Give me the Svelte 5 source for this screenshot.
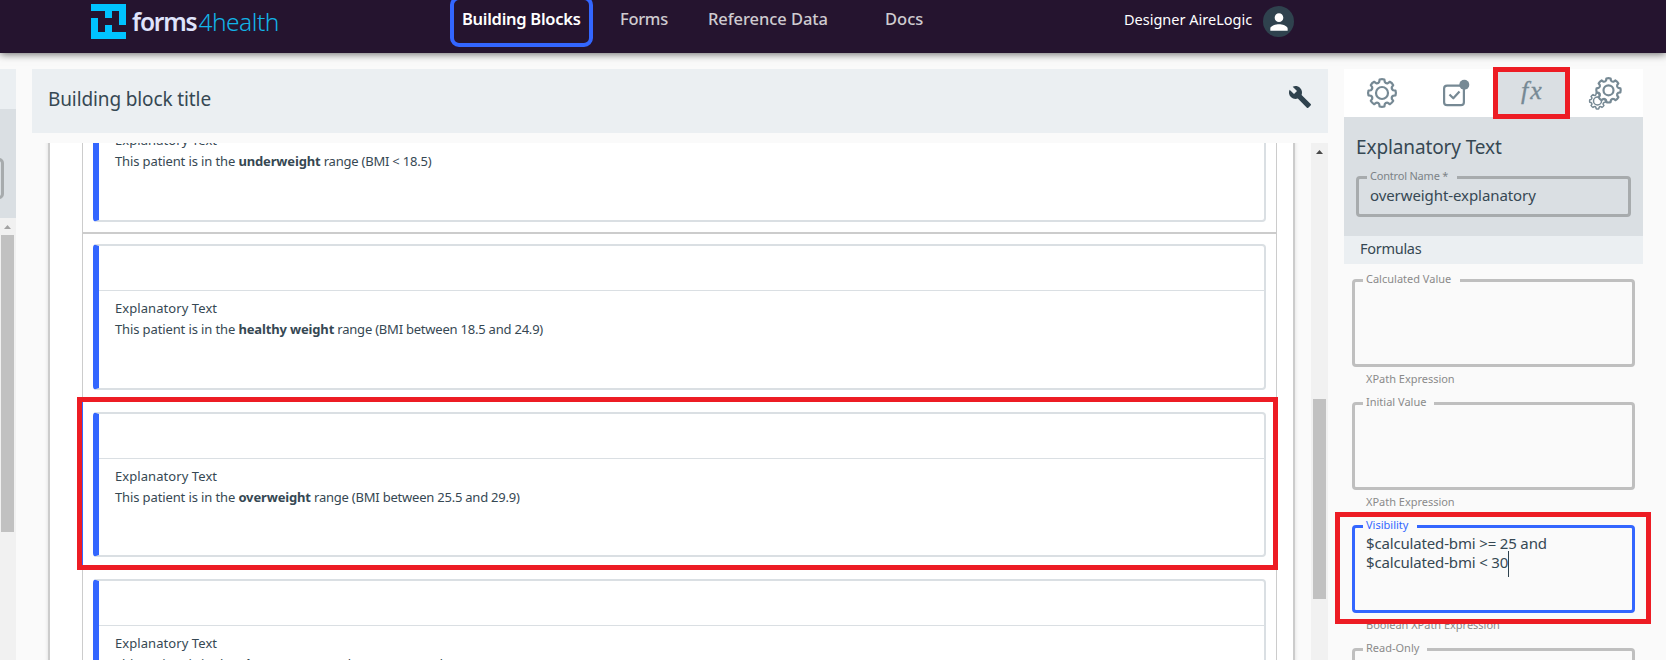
<script>
  const nav = [
    { label: 'Building Blocks', kind: 'blocks' },
    { label: 'Forms', kind: 'forms' },
    { label: 'Reference Data', kind: 'reference' },
    { label: 'Docs', kind: 'docs' }
  ];

  const cards = [
    { range: 'underweight', detail: '(BMI < 18.5)' },
    { range: 'healthy weight', detail: '(BMI between 18.5 and 24.9)' },
    { range: 'overweight', detail: '(BMI between 25.5 and 29.9)', selected: true },
    { range: 'obese', detail: '(BMI between 30 and 39.9)' }
  ];

  const formulas = [
    { label: 'Calculated Value', notch: 97, hint: 'XPath Expression', lines: [] },
    { label: 'Initial Value', notch: 71, hint: 'XPath Expression', lines: [] },
    {
      label: 'Visibility',
      notch: 54,
      hint: 'Boolean XPath Expression',
      lines: ['$calculated-bmi >= 25 and', '$calculated-bmi < 30'],
      focused: true
    },
    { label: 'Read-Only', notch: 64, hint: '', lines: [] }
  ];

  // Outline of an eight-toothed cog centred on (cx, cy)
  function cog(cx, cy, r) {
    const p = (k, deg) => {
      const a = (deg * Math.PI) / 180;
      return `${(cx + r * k * Math.sin(a)).toFixed(2)} ${(cy - r * k * Math.cos(a)).toFixed(2)}`;
    };
    let d = '';
    for (let i = 0; i < 8; i++) {
      const a = i * 45;
      d += `${i ? 'L' : 'M'}${p(0.82, a - 14)}L${p(0.98, a - 10)}Q${p(1.02, a)} ${p(0.98, a + 10)}L${p(0.82, a + 14)}Q${p(0.72, a + 22.5)} ${p(0.82, a + 31)}`;
    }
    return d + 'Z';
  }
</script>

<div class="page">
  <header>
    <div class="brand">
      <svg width="35" height="35" viewBox="0 0 5 5" shape-rendering="crispEdges" fill="#00c3ff">
        <path d="M0 0H5V3H4V1H3V2H2V1H0Z" />
        <path d="M0 2H1V4H2V3H3V4H5V5H0Z" />
      </svg>
      <span class="name"><b>forms</b><i>4health</i></span>
    </div>
    <nav>
      {#each nav as item}
        <a class={item.kind}>{item.label}</a>
      {/each}
    </nav>
    <div class="user">
      <span>Designer AireLogic</span>
      <div class="avatar">
        <svg width="26" height="26" viewBox="0 0 24 24" fill="#fff">
          <path d="M12 12c2.21 0 4-1.79 4-4s-1.79-4-4-4-4 1.79-4 4 1.79 4 4 4zm0 2c-2.67 0-8 1.34-8 4v2h16v-2c0-2.660-5.330-4-8-4z" />
        </svg>
      </div>
    </div>
  </header>

  <main>
    <aside class="left">
      <div class="left-head"></div>
      <div class="left-search"><div class="left-input"></div></div>
      <div class="track">
        <svg class="arrow" width="7" height="4" viewBox="0 0 7 4"><path d="M3.500 0L7 4H0Z" fill="#a3a3a3" /></svg>
        <div class="thumb"></div>
      </div>
    </aside>

    <section class="center">
      <div class="title">
        <h1>Building block title</h1>
        <svg width="24" height="24" viewBox="0 0 24 24" fill="#2f424e">
          <path d="M22.700 19l-9.100-9.100c.9-2.300.4-5-1.500-6.900-2-2-5-2.400-7.400-1.300L9 6 6 9 1.600 4.700C.4 7.100.9 10.100 2.900 12.100c1.900 1.900 4.600 2.400 6.900 1.500l9.100 9.100c.4.4 1 .4 1.400 0l2.300-2.300c.5-.4.5-1.100.1-1.400z" />
        </svg>
      </div>
      <div class="viewport">
        <div class="paper">
          <div class="list">
            {#each cards as card}
              <div class="row" class:selected={card.selected}>
                <article>
                  <div class="card-head"></div>
                  <div class="card-body">
                    <h3>Explanatory Text</h3>
                    <p>This patient is in the <b>{card.range}</b><span>{` range ${card.detail}`}</span></p>
                  </div>
                </article>
              </div>
            {/each}
          </div>
        </div>
        <div class="track">
          <svg class="arrow" width="7" height="4" viewBox="0 0 7 4"><path d="M3.500 0L7 4H0Z" fill="#4a4a4a" /></svg>
          <div class="thumb"></div>
        </div>
      </div>
    </section>

    <aside class="props">
      <div class="tabs">
        <div class="tab">
          <svg width="75" height="48" viewBox="0 0 75 48">
            <path d={cog(38, 24, 14)} />
            <circle cx="38" cy="24" r="6" />
          </svg>
        </div>
        <div class="tab">
          <svg width="75" height="48" viewBox="0 0 75 48">
            <rect x="25.100" y="16.600" width="19.800" height="19.600" rx="3" />
            <path d="M30.500 25.500L34.300 29.300L40.500 22.500" />
            <circle class="dot" cx="45.300" cy="15.700" r="5" />
          </svg>
        </div>
        <div class="tab active"><span>fx</span></div>
        <div class="tab">
          <svg width="74" height="48" viewBox="0 0 74 48">
            <g class="small">
              <path d={cog(29.500, 32, 8)} />
              <circle cx="29.500" cy="32" r="4" />
            </g>
            <path class="front" d={cog(40.500, 21.300, 12.300)} />
            <circle cx="40.500" cy="21.300" r="5" />
          </svg>
        </div>
      </div>
      <div class="control">
        <h2>Explanatory Text</h2>
        <div class="field">
          <label>Control Name *</label>
          <span>overweight-explanatory</span>
        </div>
      </div>
      <div class="strip">Formulas</div>
      <div class="formulas">
        {#each formulas as f}
          <div class="area" class:focused={f.focused}>
            <label style={`width:${f.notch}px`}>{f.label}</label>
            {#each f.lines as line, i}
              <div class="code">{line}{#if i === f.lines.length - 1}<span class="caret"></span>{/if}</div>
            {/each}
          </div>
          <div class="hint">{f.hint}</div>
        {/each}
      </div>
    </aside>
  </main>

  <div class="mark mark-card"></div>
  <div class="mark mark-tab"></div>
  <div class="mark mark-visibility"></div>
</div>

<style>
  :global(body) { overflow: hidden; }
  .page {
    position: relative;
    width: 1666px;
    height: 660px;
    overflow: hidden;
    background: #fafafa;
    color: #364853;
    font-family: "Noto Sans", sans-serif;
    display: flex;
    flex-direction: column;
  }
  .page, .page * { box-sizing: border-box; }
  h1, h2, h3, p { margin: 0; font-weight: 400; }
  svg { display: block; flex: none; }

  header {
    flex: none;
    height: 53px;
    display: flex;
    align-items: flex-start;
    background: #25142f;
    box-shadow: 0 1px 8px rgba(0, 0, 0, 0.6);
    z-index: 1;
  }
  .brand { display: flex; width: 450px; padding: 4px 0 0 91px; }
  .name { margin-left: 6px; font-size: 24.500px; line-height: 35px; white-space: nowrap; }
  .name b { font-weight: 600; color: #dfe3fb; letter-spacing: -1.200px; }
  .name i { font-style: normal; font-weight: 300; color: #12b4e8; letter-spacing: -0.500px; margin-left: 2px; }
  nav { display: flex; width: 675px; height: 47px; }
  nav a {
    font-size: 16.500px;
    font-weight: 500;
    line-height: 24px;
    padding-top: 7px;
    color: #cfcbd0;
    white-space: nowrap;
  }
  nav .blocks {
    width: 143px;
    height: 51px;
    margin-top: -4px;
    padding-left: 8px;
    border: 4px solid #3366ff;
    border-radius: 9px;
    font-weight: 600;
    color: #fff;
    letter-spacing: -0.280px;
  }
  nav .forms { margin-left: 27px; width: 88px; letter-spacing: -0.300px; }
  nav .reference { width: 177px; letter-spacing: -0.070px; }
  nav .docs { letter-spacing: 0; }
  .user { display: flex; margin-left: -1px; }
  .user > span { width: 139px; font-size: 14.500px; line-height: 24px; padding-top: 7px; color: #fff; white-space: nowrap; }
  .avatar {
    width: 31px;
    height: 31px;
    margin-top: 6px;
    border-radius: 50%;
    background: #2f424e;
    display: flex;
    align-items: center;
    justify-content: center;
  }

  main {
    flex: 1;
    display: grid;
    grid-template-columns: 16px 1296px 299px;
    gap: 16px;
    padding-top: 16px;
    min-height: 0;
  }
  .left, .center, .props { display: flex; flex-direction: column; min-height: 0; }
  .left-head { height: 40px; background: #ebeff2; }
  .left-search { height: 109px; background: #dadfe3; padding-top: 49px; overflow: hidden; }
  .left-input { height: 41px; width: 14px; margin-left: -10px; border: 3px solid #a7abad; border-radius: 5px; }
  .track { background: #f1f1f1; flex: 1; display: flex; flex-direction: column; align-items: center; }
  .left .track { align-items: flex-start; }
  .left .arrow { margin: 7px 0 6px 4px; }
  .left .thumb { width: 13px; height: 297px; margin-left: 1px; background: #c1c1c1; }

  .title {
    flex: none;
    height: 64px;
    background: #ebeff2;
    display: flex;
    justify-content: space-between;
    padding: 16px 16px 0;
  }
  .title h1 { font-size: 19px; line-height: 28px; letter-spacing: -0.120px; }
  .viewport { flex: 1; min-height: 0; margin-top: 10px; display: flex; overflow: hidden; }
  .paper {
    flex: none;
    width: 1247px;
    margin: -100px 16px 0 16px;
    padding: 0 16px 0 32px;
    height: 900px;
    background: #fff;
    border: 2px solid #ccc;
    box-shadow: 0 0 4px rgba(0, 0, 0, 0.12);
  }
  .list { border: solid #ccc; border-width: 0 1px; padding-top: 21.400px; }
  .row { padding: 10px; border-bottom: 2px solid #ccc; }
  .row.selected { box-shadow: -1px 0 #3366ff; }
  article {
    height: 145.600px;
    border: 2px solid #dadfe3;
    border-left: 6px solid #3366ff;
    border-radius: 4px;
  }
  .card-head { height: 45px; border-bottom: 1px solid #dadfe3; }
  .card-body { padding: 7px 16px; font-size: 13px; line-height: 20px; white-space: nowrap; }
  h3 { font-size: 13px; line-height: 21px; letter-spacing: 0.070px; }
  p { letter-spacing: -0.120px; }
  p b { font-weight: 700; letter-spacing: -0.150px; }
  p span { letter-spacing: -0.220px; white-space: pre; }
  .center .track { flex: none; width: 17px; }
  .center .arrow { margin: 7px 0 245px; }
  .center .thumb { width: 13px; height: 200px; background: #c1c1c1; }

  .tabs { flex: none; display: flex; height: 48px; background: #fff; }
  .tab { width: 75px; }
  .tab:last-child { width: 74px; }
  .tab:last-child svg { margin-left: -1px; }
  .tab svg { fill: none; stroke: #768994; stroke-width: 2.200; stroke-linejoin: round; }
  .tab svg .dot { fill: #768994; stroke: none; }
  .tab svg .small { stroke-width: 1.500; }
  .tab svg .front { fill: #fff; }
  .tab.active {
    background: #dadfe3;
    color: #768994;
    font: italic 26px/43px "Liberation Serif", serif;
    text-align: center;
    padding-left: 2px;
    letter-spacing: 2px;
    -webkit-text-stroke: 0.300px #768994;
  }
  .control { flex: none; height: 119px; background: #dadfe3; padding: 16px 12px 0; }
  h2 { font-size: 19px; line-height: 28px; letter-spacing: -0.120px; height: 43px; }
  .field {
    position: relative;
    width: 275px;
    height: 41px;
    border: 3px solid #a7abad;
    border-radius: 4px;
    padding: 6px 11px;
    font-size: 15px;
    line-height: 20px;
    letter-spacing: -0.080px;
  }
  .field label {
    position: absolute;
    left: 8px;
    top: -11px;
    width: 90px;
    padding-left: 3px;
    background: #dadfe3;
    color: #7c8387;
    font-size: 11px;
    line-height: 15px;
    letter-spacing: -0.200px;
  }
  .strip {
    flex: none;
    height: 28px;
    background: #ebeff2;
    padding-left: 16px;
    font-size: 14.500px;
    line-height: 25px;
    letter-spacing: -0.280px;
  }
  .formulas { padding: 15px 8px 0; }
  .area {
    position: relative;
    width: 283px;
    height: 88px;
    border: 3px solid #bfbfbf;
    border-radius: 4px;
    padding: 6px 11px;
  }
  .area label {
    position: absolute;
    left: 8px;
    top: -11px;
    padding-left: 3px;
    background: #fafafa;
    color: #8a8a8a;
    font-size: 11px;
    line-height: 16px;
    white-space: nowrap;
  }
  .area.focused { border-color: #3366ff; }
  .area.focused label { color: #3366ff; }
  .code { font-size: 15px; line-height: 19px; letter-spacing: -0.160px; white-space: nowrap; display: flex; height: 19px; }
  .caret { width: 1px; height: 26px; margin-top: -2px; background: #2f424e; }
  .hint { height: 35px; padding: 3px 0 0 14px; font-size: 11px; line-height: 18px; color: #8a8a8a; letter-spacing: -0.020px; white-space: nowrap; }

  .mark { position: absolute; border: 5px solid #ed1c24; z-index: 2; }
  .mark-card { left: 77px; top: 397px; width: 1201px; height: 173px; }
  .mark-tab { left: 1493px; top: 67px; width: 77px; height: 52px; }
  .mark-visibility { left: 1335px; top: 512px; width: 316px; height: 112px; }
</style>
